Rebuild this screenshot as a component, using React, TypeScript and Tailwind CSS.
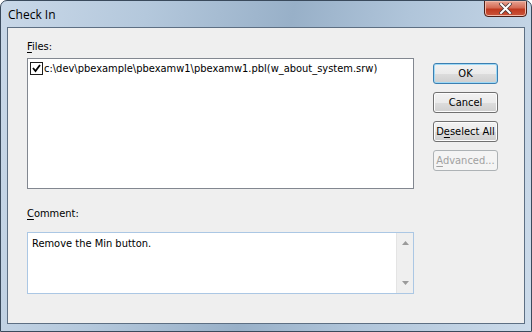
import React from "react";

const body = { fontFamily: "'DejaVu Sans Condensed', 'Liberation Sans', sans-serif" };

function Btn({ children, def, disabled }: { children: React.ReactNode; def?: boolean; disabled?: boolean }) {
  return (
    <div
      className={
        "w-[65px] h-[21px] rounded-[3px] border flex items-center justify-center text-[11px] leading-none whitespace-nowrap " +
        (disabled
          ? "border-[#adb2b5] text-[#a0a0a0] bg-[#f4f4f4]"
          : def
          ? "border-[#3c7fb1] text-black bg-[linear-gradient(#f2f2f2_0%,#ebebeb_50%,#dddddd_51%,#cfcfcf_100%)] shadow-[inset_0_0_0_1px_#9ed9f6]"
          : "border-[#707070] text-black bg-[linear-gradient(#f2f2f2_0%,#ebebeb_50%,#dddddd_51%,#cfcfcf_100%)] shadow-[inset_0_0_0_1px_#fcfcfc]")
      }
    >
      {children}
    </div>
  );
}

export default function App() {
  return (
    <div
      className="w-[532px] h-[332px] flex flex-col rounded-t-[7px] border border-[#3a4a5c] bg-[linear-gradient(100deg,#c9d8e8_0%,#b4c8dc_25%,#98b0c8_50%,#b0c5da_70%,#ccdbea_100%)] overflow-hidden"
      style={body}
    >
      <div className="h-[26px] flex items-start justify-between pl-[7px]">
        <span className="mt-[5px] text-[12px] text-black" style={{ fontFamily: "'Open Sans', 'Segoe UI', sans-serif" }}>
          Check In
        </span>
        <div className="mr-[4px] w-[43px] h-[17px] -mt-px rounded-b-[4px] border border-[#4a1e17] bg-[linear-gradient(#e8a493_0%,#d46b55_45%,#c0391f_55%,#c9553c_100%)] flex items-center justify-center shadow-[inset_0_0_0_1px_#f0b8a8]">
          <svg width="13" height="11" viewBox="0 0 13 11">
            <path d="M2 1 L11 10 M11 1 L2 10" stroke="#4a3a3a" strokeWidth="3.6" strokeLinecap="square" />
            <path d="M2 1 L11 10 M11 1 L2 10" stroke="#ffffff" strokeWidth="2" strokeLinecap="square" />
          </svg>
        </div>
      </div>
      <div className="mx-[6px] mb-[7px] flex-1 border border-[#5d6f83] bg-[#efefef] flex pl-[19px] pt-[12px]">
        <div className="w-[387px] flex flex-col">
          <div className="text-[11px] leading-[13px] h-[18px] text-black">
            <span className="underline underline-offset-2">F</span>iles:
          </div>
          <div className="h-[131px] border border-[#828790] bg-white px-[2px] pt-[3px]">
            <div className="flex items-center gap-[1px]">
              <div className="w-[13px] h-[13px] border border-[#1c1c1c] bg-white flex items-center justify-center">
                <svg width="9" height="9" viewBox="0 0 9 9">
                  <path d="M1 4 L3.5 7 L8 1" fill="none" stroke="#000" strokeWidth="1.8" />
                </svg>
              </div>
              <span className="text-[11px] leading-[13px] text-black">
                c:\dev\pbexample\pbexamw1\pbexamw1.pbl(w_about_system.srw)
              </span>
            </div>
          </div>
          <div className="mt-[18px] text-[11px] leading-[13px] h-[25px] text-black">
            <span className="underline underline-offset-2">C</span>omment:
          </div>
          <div className="h-[62px] border border-[#abc7e4] bg-white flex">
            <div className="flex-1 pl-[4px] pt-[4px] text-[11px] leading-[13px] text-black">Remove the Min button.</div>
            <div className="w-[17px] bg-[#efefef] flex flex-col items-center justify-between py-[8px] border-l border-[#e4e4e4]">
              <svg width="7" height="4" viewBox="0 0 7 4"><path d="M0 4 L3.5 0 L7 4 Z" fill="#9a9a9a" /></svg>
              <svg width="7" height="4" viewBox="0 0 7 4"><path d="M0 0 L3.5 4 L7 0 Z" fill="#9a9a9a" /></svg>
            </div>
          </div>
        </div>
        <div className="ml-[19px] pt-[23px] flex flex-col gap-[8px]">
          <Btn def>OK</Btn>
          <Btn>Cancel</Btn>
          <Btn>
            <span>
              D<span className="underline underline-offset-2">e</span>select All
            </span>
          </Btn>
          <Btn disabled>
            <span>
              <span className="underline underline-offset-2">A</span>dvanced...
            </span>
          </Btn>
        </div>
      </div>
    </div>
  );
}
